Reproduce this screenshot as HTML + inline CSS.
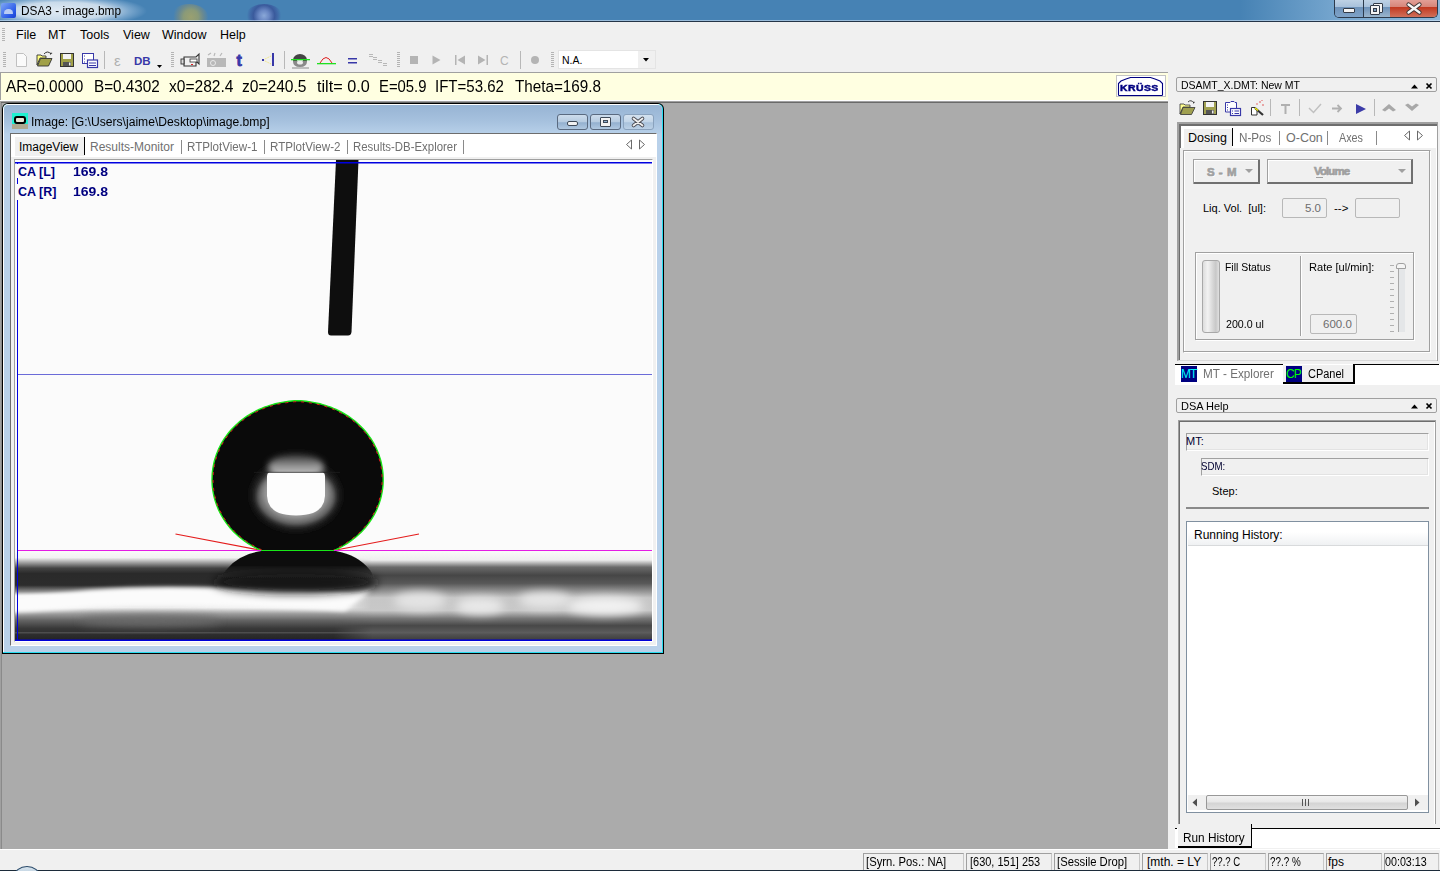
<!DOCTYPE html>
<html><head><meta charset="utf-8">
<style>
*{margin:0;padding:0;box-sizing:border-box}
html,body{width:1440px;height:871px;overflow:hidden;background:#f0f0f0;font-family:"Liberation Sans",sans-serif;font-size:12px;color:#000}
.a{position:absolute}
.t{position:absolute;white-space:nowrap;line-height:1}
svg{position:absolute;overflow:visible}
</style></head><body>
<div class="a" style="left:0;top:0;width:1440px;height:871px;overflow:hidden">

<!-- TITLE BAR -->
<div class="a" style="left:0;top:0;width:1440px;height:22px;background:#4682b4"></div>

<div class="a" style="left:0;top:0;width:200px;height:21px;background:radial-gradient(ellipse 85px 16px at 62px 11px,rgba(230,238,246,.97) 0,rgba(215,228,240,.9) 55%,rgba(170,200,228,.5) 80%,rgba(70,128,179,0) 100%)"></div>
<div class="a" style="left:170px;top:4px;width:38px;height:17px;overflow:hidden"><div class="a" style="left:0;top:0;width:38px;height:26px;border-radius:50%;background:radial-gradient(circle at 55% 50%,#9aa070 0,#8a9a78 30%,rgba(120,140,130,.7) 50%,rgba(70,130,180,0) 72%)"></div></div>
<div class="a" style="left:245px;top:4px;width:38px;height:17px;overflow:hidden"><div class="a" style="left:0;top:0;width:38px;height:26px;border-radius:50%;background:radial-gradient(circle at 50% 45%,#8aa8d8 0,#6a88c4 22%,#3a5a9c 45%,rgba(60,90,160,.6) 58%,rgba(70,130,180,0) 72%)"></div></div>
<div class="a" style="left:1240px;top:0;width:200px;height:21px;background:linear-gradient(90deg,rgba(150,190,225,0),rgba(160,198,230,.55) 50%,rgba(170,205,235,.7))"></div>
<div class="a" style="left:0;top:20px;width:1440px;height:1px;background:rgba(220,235,250,.55)"></div>
<div class="a" style="left:0;top:21px;width:1440px;height:1px;background:#253548"></div>
<!-- app icon -->
<div class="a" style="left:1px;top:3px;width:15px;height:15px;border-radius:2px;background:linear-gradient(135deg,#7fa6f5,#2a5be8 70%,#1a3fd0)"></div>
<div class="a" style="left:4px;top:9px;width:9px;height:5px;border-radius:5px 5px 1px 1px;background:#b8ccf5"></div>
<div class="t" style="--tw:100;transform:scaleX(0.9105);transform-origin:0 0;left:21px;top:4px;font-size:13px;color:#000">DSA3 - image.bmp</div>
<!-- caption buttons -->
<div class="a" style="left:1334px;top:-2px;width:104px;height:20px;border:1px solid #2c3a4c;border-top:none;border-radius:0 0 5px 5px;overflow:hidden">
  <div class="a" style="left:0;top:0;width:28px;height:19px;background:linear-gradient(180deg,#c4d6e8 0,#a9c2dc 45%,#6f93ba 50%,#7fa3c8 100%)"></div>
  <div class="a" style="left:28px;top:0;width:1px;height:19px;background:#2c3a4c"></div>
  <div class="a" style="left:29px;top:0;width:26px;height:19px;background:linear-gradient(180deg,#c4d6e8 0,#a9c2dc 45%,#6f93ba 50%,#9bb5cc 100%)"></div>
  <div class="a" style="left:55px;top:0;width:49px;height:19px;background:linear-gradient(180deg,#e6a7a0 0,#d7867a 45%,#c23a22 50%,#d0705a 100%)"></div>
</div>
<div class="a" style="left:1343px;top:8px;width:12px;height:5px;background:#f4f4f4;border:1px solid #333b48;border-radius:1px"></div>
<div class="a" style="left:1373px;top:3px;width:10px;height:10px;background:#f4f4f4;border:1px solid #333b48;border-radius:1px"></div>
<div class="a" style="left:1370px;top:5px;width:10px;height:10px;background:#f4f4f4;border:1px solid #333b48;border-radius:1px"></div>
<div class="a" style="left:1373px;top:8px;width:4px;height:4px;background:#7fa0c0;border:1px solid #333b48"></div>
<svg style="left:1407px;top:3px" width="14" height="11"><path d="M1.5 1.5 L12.5 9.5 M12.5 1.5 L1.5 9.5" stroke="#3a3030" stroke-width="4.2" stroke-linecap="round"/><path d="M1.5 1.5 L12.5 9.5 M12.5 1.5 L1.5 9.5" stroke="#f6f6f6" stroke-width="2.4" stroke-linecap="round"/></svg>

<!-- MENU -->
<div class="a" style="left:2px;top:28px;width:3px;height:14px;background:repeating-linear-gradient(180deg,#b5b5b5 0 1px,transparent 1px 2px)"></div>
<div class="t" style="left:16px;top:29px;font-size:12.5px">File</div>
<div class="t" style="left:48px;top:29px;font-size:12.5px">MT</div>
<div class="t" style="left:80px;top:29px;font-size:12.5px">Tools</div>
<div class="t" style="left:123px;top:29px;font-size:12.5px">View</div>
<div class="t" style="left:162px;top:29px;font-size:12.5px">Window</div>
<div class="t" style="left:220px;top:29px;font-size:12.5px">Help</div>

<!--TOOLBAR-->
<div class="a" style="left:0;top:47px;width:680px;height:25px;background:#f0f0f0"></div>
<svg style="left:0;top:48px" width="680" height="24">
 <!-- grips -->
 <g fill="#b4b4b4">
  <rect x="3" y="4" width="3" height="1"/><rect x="3" y="6" width="3" height="1"/><rect x="3" y="8" width="3" height="1"/><rect x="3" y="10" width="3" height="1"/><rect x="3" y="12" width="3" height="1"/><rect x="3" y="14" width="3" height="1"/><rect x="3" y="16" width="3" height="1"/><rect x="3" y="18" width="3" height="1"/>
  <rect x="171" y="4" width="3" height="1"/><rect x="171" y="6" width="3" height="1"/><rect x="171" y="8" width="3" height="1"/><rect x="171" y="10" width="3" height="1"/><rect x="171" y="12" width="3" height="1"/><rect x="171" y="14" width="3" height="1"/><rect x="171" y="16" width="3" height="1"/><rect x="171" y="18" width="3" height="1"/>
  <rect x="397" y="4" width="3" height="1"/><rect x="397" y="6" width="3" height="1"/><rect x="397" y="8" width="3" height="1"/><rect x="397" y="10" width="3" height="1"/><rect x="397" y="12" width="3" height="1"/><rect x="397" y="14" width="3" height="1"/><rect x="397" y="16" width="3" height="1"/><rect x="397" y="18" width="3" height="1"/>
  <rect x="551" y="4" width="3" height="1"/><rect x="551" y="6" width="3" height="1"/><rect x="551" y="8" width="3" height="1"/><rect x="551" y="10" width="3" height="1"/><rect x="551" y="12" width="3" height="1"/><rect x="551" y="14" width="3" height="1"/><rect x="551" y="16" width="3" height="1"/><rect x="551" y="18" width="3" height="1"/>
 </g>
 <!-- new doc -->
 <path d="M16.5 5.5 L23.5 5.5 L26.5 8.5 L26.5 18.5 L16.5 18.5 Z" fill="#fafafa" stroke="#c0c0c0"/>
 <!-- open -->
 <path d="M37 7 L41 7 L42 8 L46 8 L46 10 L40 10 L37 17 Z" fill="#ffff80" stroke="#333" stroke-width="0.9"/>
 <path d="M37.5 18 L40.5 10.5 L52 10.5 L48.5 18 Z" fill="#a0a048" stroke="#333" stroke-width="0.9"/>
 <path d="M44 6 Q47.5 2 51 6" fill="none" stroke="#333" stroke-width="1"/><path d="M50 7 L52.5 5 L50.5 4.5 Z" fill="#333"/>
 <!-- save -->
 <rect x="60.5" y="5.5" width="13" height="13" fill="#a0a048" stroke="#333" stroke-width="1"/>
 <rect x="63" y="6" width="8" height="5" fill="#f4f4f4"/>
 <rect x="63" y="14" width="8" height="4" fill="#555"/><rect x="69" y="14.5" width="1.5" height="3" fill="#eee"/>
 <!-- copy -->
 <rect x="82.5" y="5.5" width="11" height="10" fill="#fff" stroke="#3838a8" stroke-width="1"/>
 <path d="M84 8 L85 8 M84 11 L85 11 M84 14 L85 14" stroke="#3838a8" stroke-width="1"/>
 <rect x="87.5" y="12" width="10" height="7.5" fill="#fff" stroke="#3838a8" stroke-width="1.2"/>
 <path d="M89 15 L96 15 M89 17.5 L96 17.5" stroke="#3838a8" stroke-width="1"/>
 <rect x="104" y="3" width="1" height="18" fill="#b8b8b8"/>
 <!-- epsilon -->
 <text x="114" y="17.5" font-family="Liberation Sans" font-size="15" fill="#b0b0b0">&#949;</text>
 <!-- DB -->
 <text x="134" y="17" font-family="Liberation Sans" font-weight="bold" font-size="11.5" fill="#3838a8">DB</text>
 <path d="M157 17 L162 17 L159.5 20 Z" fill="#000"/>
 <!-- camera -->
 <path d="M184 9 L196 9 L199 6 L199 16 L196 13 L196 18 L184 18 Z" fill="#f0f0f0" stroke="#333" stroke-width="1.1"/>
 <rect x="181" y="11" width="3" height="5" fill="#ddd" stroke="#333" stroke-width="0.9"/>
 <rect x="190" y="11" width="7" height="3" fill="#fff" stroke="#333" stroke-width="0.8"/>
 <rect x="191" y="16" width="2" height="1" fill="#e02020"/>
 <!-- gray camera -->
 <path d="M207 10 L226 10 L226 19 L207 19 Z" fill="#b8b8b8"/>
 <path d="M208 7 L211 5 M214 8 L215 5 M220 8 L222 5" stroke="#b8b8b8" stroke-width="1.2"/>
 <circle cx="213" cy="15" r="2.5" fill="none" stroke="#e8e8e8" stroke-width="1"/>
 <!-- t -->
 <text x="236.5" y="18" font-family="Liberation Sans" font-weight="bold" font-size="16" fill="#3838a8" stroke="#3838a8" stroke-width="0.8">t</text>
 <!-- <| -->
 <path d="M263 12 L273 7 M263 12 L273 17" stroke="#f0e040" stroke-width="0.8" stroke-dasharray="1 1"/>
 <rect x="262" y="11" width="2" height="2" fill="#3838a8"/>
 <rect x="272" y="5" width="2" height="13" fill="#3838a8"/>
 <rect x="284" y="3" width="1" height="18" fill="#b8b8b8"/>
 <!-- drop icon -->
 <ellipse cx="300" cy="12" rx="7" ry="6" fill="#444"/>
 <ellipse cx="300" cy="13.5" rx="3.2" ry="2.5" fill="#ececec"/>
 <path d="M293 13 Q293 19 300 19 Q307 19 307 13" fill="#8a8a8a"/>
 <ellipse cx="300" cy="14.5" rx="3" ry="2" fill="#ececec"/>
 <rect x="291" y="11" width="19" height="1.3" fill="#20e020"/>
 <rect x="292" y="19.5" width="17" height="1" fill="#8a8a8a"/>
 <!-- arc -->
 <path d="M320 15 Q326 4 332 15" fill="none" stroke="#e02020" stroke-width="1"/>
 <rect x="317" y="15" width="19" height="1.3" fill="#20e020"/>
 <!-- = -->
 <rect x="348" y="10" width="9" height="1.5" fill="#3838a8"/><rect x="348" y="14" width="9" height="1.5" fill="#3838a8"/>
 <!-- steps -->
 <g fill="#b8b8b8"><rect x="369" y="6" width="4" height="1"/><rect x="369" y="8" width="4" height="1"/><rect x="373" y="9" width="4" height="1"/><rect x="373" y="11" width="4" height="1"/><rect x="378" y="12" width="4" height="1"/><rect x="378" y="14" width="4" height="1"/><rect x="383" y="15" width="4" height="1"/><rect x="383" y="17" width="4" height="1"/></g>
 <!-- media -->
 <rect x="410" y="8" width="8" height="8" fill="#b4b4b4"/>
 <path d="M432.5 7.5 L440.5 12 L432.5 16.5 Z" fill="#b4b4b4"/>
 <path d="M455 7 L456.5 7 L456.5 17 L455 17 Z M465 7.5 L457.5 12 L465 16.5 Z" fill="#b4b4b4"/>
 <path d="M486.5 7 L488 7 L488 17 L486.5 17 Z M478 7.5 L485.5 12 L478 16.5 Z" fill="#b4b4b4"/>
 <text x="500" y="17" font-family="Liberation Sans" font-size="12" fill="#b4b4b4">C</text>
 <rect x="520" y="3" width="1" height="18" fill="#b8b8b8"/>
 <circle cx="535" cy="12" r="4" fill="#b4b4b4"/>
</svg>
<!-- combo N.A. -->
<div class="a" style="left:558px;top:50px;width:98px;height:19px;background:#fff;border:1px solid #e4e4e4"></div>
<div class="a" style="left:638px;top:51px;width:17px;height:17px;background:#f0f0f0"></div>
<svg style="left:643px;top:58px" width="8" height="5"><path d="M0 0 L6 0 L3 3.5 Z" fill="#000"/></svg>
<div class="t" style="left:562px;top:55px;font-size:10.5px;color:#000">N.A.</div>

<!--TOOLBAR_END-->

<!-- YELLOW INFO BAR -->
<div class="a" style="left:0;top:72px;width:1168px;height:1px;background:#a0a0a0"></div>
<div class="a" style="left:0;top:73px;width:1168px;height:27px;background:#ffffe1;border-left:1px solid #a0a0a0"></div>
<div class="t" style="--tw:77.3;transform:scaleX(0.9601);transform-origin:0 0;left:6px;top:79px;font-size:16px">AR=0.0000</div>
<div class="t" style="--tw:65.8;transform:scaleX(0.9543);transform-origin:0 0;left:94px;top:79px;font-size:16px">B=0.4302</div>
<div class="t" style="--tw:64.5;transform:scaleX(0.9731);transform-origin:0 0;left:169px;top:79px;font-size:16px">x0=282.4</div>
<div class="t" style="--tw:64.5;transform:scaleX(0.9731);transform-origin:0 0;left:242px;top:79px;font-size:16px">z0=240.5</div>
<div class="t" style="--tw:52.7;transform:scaleX(1.0129);transform-origin:0 0;left:317px;top:79px;font-size:16px">tilt= 0.0</div>
<div class="t" style="--tw:47.5;transform:scaleX(0.9285);transform-origin:0 0;left:379px;top:79px;font-size:16px">E=05.9</div>
<div class="t" style="--tw:68.9;transform:scaleX(0.9390);transform-origin:0 0;left:435px;top:79px;font-size:16px">IFT=53.62</div>
<div class="t" style="--tw:86;transform:scaleX(0.9524);transform-origin:0 0;left:515px;top:79px;font-size:16px">Theta=169.8</div>
<!-- kruss logo -->
<svg style="left:1116px;top:75px" width="50" height="23">
 <rect x="0.5" y="0.5" width="49" height="21" fill="#fff" stroke="#c4c4c4"/>
 <path d="M2.5 20 L2.5 8.5 L5 6 L10 4 L14.5 2.5 L34.5 2.5 L39 4 L44 6 L46.5 8.5 L46.5 20 Q46.5 20.5 45.5 20.5 L3.5 20.5 Q2.5 20.5 2.5 20 Z" fill="none" stroke="#000080" stroke-width="1.1"/>
</svg>
<div class="t" style="left:1120px;top:83px;font-size:10.5px;font-weight:bold;color:#000080;letter-spacing:0.4px;-webkit-text-stroke:0.5px #000080;transform:scaleY(0.85);transform-origin:0 0">KR&#220;SS</div>
<!-- MDI AREA -->
<div class="a" style="left:0;top:100px;width:1168px;height:1px;background:#fff"></div>
<div class="a" style="left:0;top:101px;width:1168px;height:748px;background:#ababab;border-top:1px solid #a0a0a0;border-left:1px solid #a0a0a0"></div>
<div class="a" style="left:1px;top:102px;width:1167px;height:1px;background:#696969"></div>
<div class="a" style="left:1px;top:103px;width:1px;height:746px;background:#8a8a8a"></div>
<div class="a" style="left:0;top:849px;width:1440px;height:1px;background:#fff"></div>

<!--CHILD-->
<!-- MDI child frame -->
<div class="a" style="left:2px;top:103px;width:662px;height:551px;background:#000;border-radius:6px 6px 0 0"></div>
<div class="a" style="left:3px;top:104px;width:660px;height:549px;background:#28dcf0;border-radius:5px 5px 0 0"></div>
<div class="a" style="left:3px;top:104px;width:659px;height:548px;background:#fff;border-radius:5px 5px 0 0"></div>
<div class="a" style="left:4px;top:105px;width:658px;height:547px;background:linear-gradient(180deg,#97b4d4 0,#a6c1de 16px,#b6cfe8 28px,#b9d1ea 29px,#b9d1ea 100%);border-radius:4px 4px 0 0"></div>
<!-- child icon -->
<div class="a" style="left:12px;top:113px;width:16px;height:11px;background:#20f0d0"></div>
<div class="a" style="left:12px;top:124px;width:16px;height:5px;background:#b0a890"></div>
<div class="a" style="left:14px;top:116px;width:12px;height:8px;background:#e8e8d8;border:2px solid #000;border-radius:3px"></div>
<div class="t" style="--tw:238.5;transform:scaleX(0.9698);transform-origin:0 0;left:31px;top:116px;font-size:12.5px;color:#000">Image: [G:\Users\jaime\Desktop\image.bmp]</div>
<!-- child buttons -->
<div class="a" style="left:557px;top:114px;width:31px;height:16px;border:1px solid #5a6a80;border-radius:3px;background:linear-gradient(180deg,#cddcec 0,#b6cbe0 50%,#93b0cf 55%,#b0c8e0 100%)"></div>
<div class="a" style="left:590px;top:114px;width:31px;height:16px;border:1px solid #5a6a80;border-radius:3px;background:linear-gradient(180deg,#cddcec 0,#b6cbe0 50%,#93b0cf 55%,#b0c8e0 100%)"></div>
<div class="a" style="left:623px;top:114px;width:31px;height:16px;border:1px solid #8aa2bd;border-radius:3px;background:linear-gradient(180deg,#d4e2f0 0,#c2d5e8 50%,#a9c2dc 55%,#bcd1e6 100%)"></div>
<div class="a" style="left:567px;top:121px;width:11px;height:5px;background:#f2f2f2;border:1px solid #3f4a58;border-radius:2px"></div>
<div class="a" style="left:600px;top:117px;width:11px;height:10px;background:#f2f2f2;border:1px solid #3f4a58;border-radius:1px"></div>
<div class="a" style="left:603px;top:120px;width:5px;height:3px;background:#8fb0d0;border:1px solid #3f4a58"></div>
<svg style="left:632px;top:117px" width="12" height="10"><path d="M1.5 1.5 L10.5 8.5 M10.5 1.5 L1.5 8.5" stroke="#4a4a52" stroke-width="3.6" stroke-linecap="round"/><path d="M1.5 1.5 L10.5 8.5 M10.5 1.5 L1.5 8.5" stroke="#f0f0f0" stroke-width="1.8" stroke-linecap="round"/></svg>

<!-- client area -->
<div class="a" style="left:10px;top:133px;width:647px;height:513px;background:#fff;border-top:1px solid #6d6d6d;border-left:1px solid #6d6d6d;border-right:1px solid #fff;border-bottom:1px solid #fff"></div>
<div class="a" style="left:11px;top:134px;width:645px;height:511px;background:#f0f0f0"></div>
<div class="a" style="left:11px;top:134px;width:645px;height:23px;background:#fff"></div>
<!-- tabs -->
<div class="a" style="left:15px;top:137px;width:70px;height:19px;background:#f0f0f0"></div>
<div class="a" style="left:84px;top:137px;width:1px;height:18px;background:#000"></div>
<div class="t" style="left:19px;top:141px;font-size:12px;color:#000">ImageView</div>
<div class="t" style="left:90px;top:141px;font-size:12px;color:#707070">Results-Monitor</div>
<div class="a" style="left:181px;top:140px;width:1px;height:14px;background:#8a8a8a"></div>
<div class="t" style="--tw:70.5;transform:scaleX(0.9668);transform-origin:0 0;left:187px;top:141px;font-size:12px;color:#707070">RTPlotView-1</div>
<div class="a" style="left:264px;top:140px;width:1px;height:14px;background:#8a8a8a"></div>
<div class="t" style="--tw:70.5;transform:scaleX(0.9668);transform-origin:0 0;left:270px;top:141px;font-size:12px;color:#707070">RTPlotView-2</div>
<div class="a" style="left:347px;top:140px;width:1px;height:14px;background:#8a8a8a"></div>
<div class="t" style="--tw:104;transform:scaleX(0.9510);transform-origin:0 0;left:353px;top:141px;font-size:12px;color:#707070">Results-DB-Explorer</div>
<div class="a" style="left:463px;top:140px;width:1px;height:14px;background:#8a8a8a"></div>
<svg style="left:625px;top:139px" width="22" height="12"><path d="M6.5 1 L6.5 10 L1.5 5.5 Z M14.5 1 L14.5 10 L19.5 5.5 Z" fill="none" stroke="#6a6a6a" stroke-width="1"/></svg>
<!-- image border -->
<div class="a" style="left:14px;top:159px;width:639px;height:483px;border:1px solid #a0a0a0;border-right-color:#fff;border-bottom-color:#fff"></div>

<!--IMG-->
<svg style="left:15px;top:160px" width="637" height="481" viewBox="15 160 637 481">
 <defs>
  <filter id="b1" x="-100%" y="-200%" width="300%" height="500%"><feGaussianBlur stdDeviation="0.7"/></filter>
  <filter id="b2" x="-100%" y="-200%" width="300%" height="500%"><feGaussianBlur stdDeviation="2"/></filter>
  <filter id="b3" x="-100%" y="-200%" width="300%" height="500%"><feGaussianBlur stdDeviation="3"/></filter>
  <filter id="b5" x="-100%" y="-200%" width="300%" height="500%"><feGaussianBlur stdDeviation="5"/></filter>
  <filter id="b8" x="-100%" y="-200%" width="300%" height="500%"><feGaussianBlur stdDeviation="8"/></filter>
  <clipPath id="sub"><rect x="15" y="551" width="637" height="90"/></clipPath>
  <clipPath id="drop"><path d="M261.1 550.5 L258.8 549.5 L256.6 548.4 L254.4 547.2 L252.2 546.0 L250.0 544.7 L247.9 543.3 L245.8 541.9 L243.7 540.4 L241.6 538.8 L239.6 537.2 L237.6 535.5 L235.7 533.7 L233.8 531.9 L232.0 530.0 L230.2 528.0 L228.5 525.9 L226.9 523.8 L225.3 521.6 L223.8 519.3 L222.3 517.0 L221.0 514.6 L219.7 512.2 L218.5 509.7 L217.4 507.1 L216.4 504.5 L215.5 501.9 L214.7 499.2 L214.0 496.5 L213.4 493.7 L212.9 490.9 L212.5 488.1 L212.2 485.3 L212.1 482.5 L212.0 479.6 L212.1 476.7 L212.2 473.9 L212.5 471.0 L212.9 468.2 L213.4 465.3 L214.0 462.5 L214.7 459.7 L215.6 456.9 L216.5 454.2 L217.6 451.5 L218.7 448.8 L220.0 446.2 L221.3 443.7 L222.8 441.2 L224.3 438.7 L226.0 436.3 L227.7 434.0 L229.5 431.7 L231.4 429.5 L233.4 427.4 L235.4 425.4 L237.6 423.4 L239.7 421.5 L242.0 419.7 L244.3 418.0 L246.6 416.4 L249.1 414.8 L251.5 413.3 L254.0 412.0 L256.6 410.7 L259.1 409.4 L261.8 408.3 L264.4 407.2 L267.1 406.3 L269.8 405.4 L272.5 404.6 L275.2 403.8 L278.0 403.2 L280.7 402.6 L283.5 402.1 L286.3 401.7 L289.1 401.3 L291.9 401.0 L294.8 400.7 L297.6 400.6 L300.4 400.7 L303.3 401.0 L306.1 401.3 L308.9 401.7 L311.7 402.1 L314.5 402.6 L317.2 403.2 L320.0 403.8 L322.7 404.6 L325.4 405.4 L328.1 406.3 L330.8 407.2 L333.4 408.3 L336.1 409.4 L338.6 410.7 L341.2 412.0 L343.7 413.3 L346.1 414.8 L348.6 416.4 L350.9 418.0 L353.2 419.7 L355.5 421.5 L357.6 423.4 L359.8 425.4 L361.8 427.4 L363.8 429.5 L365.7 431.7 L367.5 434.0 L369.2 436.3 L370.9 438.7 L372.4 441.2 L373.9 443.7 L375.2 446.2 L376.5 448.8 L377.6 451.5 L378.7 454.2 L379.6 456.9 L380.5 459.7 L381.2 462.5 L381.8 465.3 L382.3 468.2 L382.7 471.0 L383.0 473.9 L383.1 476.7 L383.2 479.6 L383.1 482.5 L383.0 485.3 L382.7 488.1 L382.3 490.9 L381.8 493.7 L381.2 496.5 L380.5 499.2 L379.7 501.9 L378.8 504.5 L377.8 507.1 L376.7 509.7 L375.5 512.2 L374.2 514.6 L372.9 517.0 L371.4 519.3 L369.9 521.6 L368.3 523.8 L366.7 525.9 L365.0 528.0 L363.2 530.0 L361.4 531.9 L359.5 533.7 L357.6 535.5 L355.6 537.2 L353.6 538.8 L351.5 540.4 L349.4 541.9 L347.3 543.3 L345.2 544.7 L343.0 546.0 L340.8 547.2 L338.6 548.4 L336.4 549.5 L334.1 550.5 Z"/></clipPath>
  <linearGradient id="subg" x1="0" y1="551" x2="0" y2="641" gradientUnits="userSpaceOnUse">
   <stop offset="0" stop-color="#fbfbfb"/><stop offset="0.08" stop-color="#f4f4f4"/>
   <stop offset="0.17" stop-color="#6a6a6a"/><stop offset="0.26" stop-color="#3a3a3a"/>
   <stop offset="0.38" stop-color="#404040"/><stop offset="0.48" stop-color="#9a9a9a"/>
   <stop offset="0.62" stop-color="#b4b4b4"/><stop offset="0.74" stop-color="#707070"/>
   <stop offset="0.86" stop-color="#4a4a4a"/><stop offset="0.93" stop-color="#5a5a5a"/>
   <stop offset="1" stop-color="#303030"/>
  </linearGradient>
  <linearGradient id="subL" x1="0" y1="551" x2="0" y2="641" gradientUnits="userSpaceOnUse">
   <stop offset="0" stop-color="#fbfbfb"/><stop offset="0.075" stop-color="#f2f2f2"/>
   <stop offset="0.19" stop-color="#444"/><stop offset="0.25" stop-color="#2a2a2a"/>
   <stop offset="0.38" stop-color="#2c2c2c"/><stop offset="0.45" stop-color="#8a8a8a"/>
   <stop offset="0.5" stop-color="#f6f6f6"/><stop offset="0.63" stop-color="#eeeeee"/>
   <stop offset="0.7" stop-color="#9a9a9a"/><stop offset="0.77" stop-color="#646464"/>
   <stop offset="0.86" stop-color="#383838"/><stop offset="1" stop-color="#222"/>
  </linearGradient>
  <linearGradient id="subR" x1="0" y1="551" x2="0" y2="641" gradientUnits="userSpaceOnUse">
   <stop offset="0" stop-color="#fbfbfb"/><stop offset="0.1" stop-color="#eeeeee"/>
   <stop offset="0.18" stop-color="#6a6a6a"/><stop offset="0.27" stop-color="#464646"/>
   <stop offset="0.36" stop-color="#585858"/><stop offset="0.44" stop-color="#8e8e8e"/>
   <stop offset="0.52" stop-color="#c6c6c6"/><stop offset="0.66" stop-color="#c8c8c8"/>
   <stop offset="0.75" stop-color="#767676"/><stop offset="0.83" stop-color="#484848"/>
   <stop offset="0.9" stop-color="#5a5a5a"/><stop offset="1" stop-color="#3a3a3a"/>
  </linearGradient>
  <linearGradient id="mLg" x1="15" y1="0" x2="652" y2="0" gradientUnits="userSpaceOnUse">
   <stop offset="0" stop-color="#fff"/><stop offset="0.5" stop-color="#fff"/><stop offset="0.56" stop-color="#000"/>
  </linearGradient>
  <mask id="mL"><rect x="15" y="551" width="637" height="90" fill="url(#mLg)"/></mask>
  <linearGradient id="hiG" x1="0" y1="0" x2="0" y2="1"><stop offset="0" stop-color="#2a2a2a"/><stop offset="0.5" stop-color="#9a9a9a"/><stop offset="1" stop-color="#d8d8d8"/></linearGradient>
  <linearGradient id="domeG" x1="0" y1="551" x2="0" y2="580" gradientUnits="userSpaceOnUse"><stop offset="0" stop-color="#0c0c0c"/><stop offset="0.5" stop-color="#111"/><stop offset="1" stop-color="#1c1c1c" stop-opacity="0"/></linearGradient>
 </defs>
 <rect x="15" y="160" width="637" height="481" fill="#fbfbfb"/>
 <!-- needle -->
 <path d="M336 160 L358.5 160 L351.5 332 Q351 335.5 348 335.5 L331 335.5 Q328 335.5 328 332 Z" fill="#0e0e0e"/>
 <!-- substrate -->
 <g clip-path="url(#sub)">
  <rect x="15" y="551" width="637" height="90" fill="url(#subR)"/>
  <rect x="15" y="551" width="637" height="90" fill="url(#subL)" mask="url(#mL)"/>
  <!-- left white band curve -->
  <path d="M-20 597 Q40 596 90 590 Q150 585 220 588 Q300 591 340 592 Q355 594 372 590 L345 611 Q300 608 220 606 Q150 604 90 607 Q40 612 -20 614 Z" fill="#fbfbfb" filter="url(#b2)"/>
  <ellipse cx="150" cy="621" rx="70" ry="5" fill="#6a6a6a" filter="url(#b5)"/>
  <!-- right blotches -->
  <ellipse cx="420" cy="601" rx="26" ry="9" fill="#e4e4e4" filter="url(#b5)"/>
  <ellipse cx="480" cy="606" rx="24" ry="8" fill="#eaeaea" filter="url(#b5)"/>
  <ellipse cx="545" cy="600" rx="26" ry="8" fill="#e6e6e6" filter="url(#b5)"/>
  <ellipse cx="605" cy="606" rx="38" ry="9" fill="#f2f2f2" filter="url(#b5)"/>
  <!-- under-drop dark bulge -->
  <ellipse cx="296" cy="582" rx="82" ry="11" fill="#181818" filter="url(#b5)"/>
  <path d="M261 551 Q238 555 226 570 Q224 574 220 580 L376 580 Q372 574 370 570 Q358 555 336 551 Z" fill="url(#domeG)" filter="url(#b1)"/>
  <rect x="-20" y="632" width="720" height="1.5" fill="#606060" opacity=".6" filter="url(#b1)"/>
 </g>
 <!-- drop -->
 <path d="M261.1 550.5 L258.8 549.5 L256.6 548.4 L254.4 547.2 L252.2 546.0 L250.0 544.7 L247.9 543.3 L245.8 541.9 L243.7 540.4 L241.6 538.8 L239.6 537.2 L237.6 535.5 L235.7 533.7 L233.8 531.9 L232.0 530.0 L230.2 528.0 L228.5 525.9 L226.9 523.8 L225.3 521.6 L223.8 519.3 L222.3 517.0 L221.0 514.6 L219.7 512.2 L218.5 509.7 L217.4 507.1 L216.4 504.5 L215.5 501.9 L214.7 499.2 L214.0 496.5 L213.4 493.7 L212.9 490.9 L212.5 488.1 L212.2 485.3 L212.1 482.5 L212.0 479.6 L212.1 476.7 L212.2 473.9 L212.5 471.0 L212.9 468.2 L213.4 465.3 L214.0 462.5 L214.7 459.7 L215.6 456.9 L216.5 454.2 L217.6 451.5 L218.7 448.8 L220.0 446.2 L221.3 443.7 L222.8 441.2 L224.3 438.7 L226.0 436.3 L227.7 434.0 L229.5 431.7 L231.4 429.5 L233.4 427.4 L235.4 425.4 L237.6 423.4 L239.7 421.5 L242.0 419.7 L244.3 418.0 L246.6 416.4 L249.1 414.8 L251.5 413.3 L254.0 412.0 L256.6 410.7 L259.1 409.4 L261.8 408.3 L264.4 407.2 L267.1 406.3 L269.8 405.4 L272.5 404.6 L275.2 403.8 L278.0 403.2 L280.7 402.6 L283.5 402.1 L286.3 401.7 L289.1 401.3 L291.9 401.0 L294.8 400.7 L297.6 400.6 L300.4 400.7 L303.3 401.0 L306.1 401.3 L308.9 401.7 L311.7 402.1 L314.5 402.6 L317.2 403.2 L320.0 403.8 L322.7 404.6 L325.4 405.4 L328.1 406.3 L330.8 407.2 L333.4 408.3 L336.1 409.4 L338.6 410.7 L341.2 412.0 L343.7 413.3 L346.1 414.8 L348.6 416.4 L350.9 418.0 L353.2 419.7 L355.5 421.5 L357.6 423.4 L359.8 425.4 L361.8 427.4 L363.8 429.5 L365.7 431.7 L367.5 434.0 L369.2 436.3 L370.9 438.7 L372.4 441.2 L373.9 443.7 L375.2 446.2 L376.5 448.8 L377.6 451.5 L378.7 454.2 L379.6 456.9 L380.5 459.7 L381.2 462.5 L381.8 465.3 L382.3 468.2 L382.7 471.0 L383.0 473.9 L383.1 476.7 L383.2 479.6 L383.1 482.5 L383.0 485.3 L382.7 488.1 L382.3 490.9 L381.8 493.7 L381.2 496.5 L380.5 499.2 L379.7 501.9 L378.8 504.5 L377.8 507.1 L376.7 509.7 L375.5 512.2 L374.2 514.6 L372.9 517.0 L371.4 519.3 L369.9 521.6 L368.3 523.8 L366.7 525.9 L365.0 528.0 L363.2 530.0 L361.4 531.9 L359.5 533.7 L357.6 535.5 L355.6 537.2 L353.6 538.8 L351.5 540.4 L349.4 541.9 L347.3 543.3 L345.2 544.7 L343.0 546.0 L340.8 547.2 L338.6 548.4 L336.4 549.5 L334.1 550.5 Z" fill="#0a0a0a"/>
 <g clip-path="url(#drop)">
  <ellipse cx="296" cy="495" rx="44" ry="35" fill="#2a2a2a" filter="url(#b3)"/>
  <ellipse cx="296" cy="496" rx="39" ry="29" fill="#707070" filter="url(#b2)"/>
  <ellipse cx="296" cy="494" rx="33" ry="25" fill="#9a9a9a" filter="url(#b2)"/>
  <ellipse cx="296" cy="467" rx="28" ry="13" fill="url(#hiG)" filter="url(#b3)"/>
  <path d="M269 472.5 L323 472.5 Q325 473 325 476 L325 496 Q324 515.5 296 515.5 Q268 515.5 267 496 L267 476 Q267 473 269 472.5 Z" fill="#fdfdfd" filter="url(#b1)"/>
  <rect x="254" y="471.8" width="86" height="1.2" fill="#202020" opacity=".6"/>
 </g>
 <path d="M175.5 534 L262 550.5 M333.6 550.5 L419 534" stroke="#e41c1c" stroke-width="1.1" fill="none"/>
 <path d="M261.1 550.5 L258.8 549.5 L256.6 548.4 L254.4 547.2 L252.2 546.0 L250.0 544.7 L247.9 543.3 L245.8 541.9 L243.7 540.4 L241.6 538.8 L239.6 537.2 L237.6 535.5 L235.7 533.7 L233.8 531.9 L232.0 530.0 L230.2 528.0 L228.5 525.9 L226.9 523.8 L225.3 521.6 L223.8 519.3 L222.3 517.0 L221.0 514.6 L219.7 512.2 L218.5 509.7 L217.4 507.1 L216.4 504.5 L215.5 501.9 L214.7 499.2 L214.0 496.5 L213.4 493.7 L212.9 490.9 L212.5 488.1 L212.2 485.3 L212.1 482.5 L212.0 479.6 L212.1 476.7 L212.2 473.9 L212.5 471.0 L212.9 468.2 L213.4 465.3 L214.0 462.5 L214.7 459.7 L215.6 456.9 L216.5 454.2 L217.6 451.5 L218.7 448.8 L220.0 446.2 L221.3 443.7 L222.8 441.2 L224.3 438.7 L226.0 436.3 L227.7 434.0 L229.5 431.7 L231.4 429.5 L233.4 427.4 L235.4 425.4 L237.6 423.4 L239.7 421.5 L242.0 419.7 L244.3 418.0 L246.6 416.4 L249.1 414.8 L251.5 413.3 L254.0 412.0 L256.6 410.7 L259.1 409.4 L261.8 408.3 L264.4 407.2 L267.1 406.3 L269.8 405.4 L272.5 404.6 L275.2 403.8 L278.0 403.2 L280.7 402.6 L283.5 402.1 L286.3 401.7 L289.1 401.3 L291.9 401.0 L294.8 400.7 L297.6 400.6 L300.4 400.7 L303.3 401.0 L306.1 401.3 L308.9 401.7 L311.7 402.1 L314.5 402.6 L317.2 403.2 L320.0 403.8 L322.7 404.6 L325.4 405.4 L328.1 406.3 L330.8 407.2 L333.4 408.3 L336.1 409.4 L338.6 410.7 L341.2 412.0 L343.7 413.3 L346.1 414.8 L348.6 416.4 L350.9 418.0 L353.2 419.7 L355.5 421.5 L357.6 423.4 L359.8 425.4 L361.8 427.4 L363.8 429.5 L365.7 431.7 L367.5 434.0 L369.2 436.3 L370.9 438.7 L372.4 441.2 L373.9 443.7 L375.2 446.2 L376.5 448.8 L377.6 451.5 L378.7 454.2 L379.6 456.9 L380.5 459.7 L381.2 462.5 L381.8 465.3 L382.3 468.2 L382.7 471.0 L383.0 473.9 L383.1 476.7 L383.2 479.6 L383.1 482.5 L383.0 485.3 L382.7 488.1 L382.3 490.9 L381.8 493.7 L381.2 496.5 L380.5 499.2 L379.7 501.9 L378.8 504.5 L377.8 507.1 L376.7 509.7 L375.5 512.2 L374.2 514.6 L372.9 517.0 L371.4 519.3 L369.9 521.6 L368.3 523.8 L366.7 525.9 L365.0 528.0 L363.2 530.0 L361.4 531.9 L359.5 533.7 L357.6 535.5 L355.6 537.2 L353.6 538.8 L351.5 540.4 L349.4 541.9 L347.3 543.3 L345.2 544.7 L343.0 546.0 L340.8 547.2 L338.6 548.4 L336.4 549.5 L334.1 550.5" fill="none" stroke="#18e818" stroke-width="1.4"/>
 <path d="M261.1 550.5 L258.8 549.5 L256.6 548.4 L254.4 547.2 L252.2 546.0 L250.0 544.7 L247.9 543.3 L245.8 541.9 L243.7 540.4 L241.6 538.8 L239.6 537.2 L237.6 535.5 L235.7 533.7 L233.8 531.9 L232.0 530.0 L230.2 528.0 L228.5 525.9 L226.9 523.8 L225.3 521.6 L223.8 519.3 L222.3 517.0 L221.0 514.6 L219.7 512.2 L218.5 509.7 L217.4 507.1 L216.4 504.5 L215.5 501.9 L214.7 499.2 L214.0 496.5 L213.4 493.7 L212.9 490.9 L212.5 488.1 L212.2 485.3 L212.1 482.5 L212.0 479.6 L212.1 476.7 L212.2 473.9 L212.5 471.0 L212.9 468.2 L213.4 465.3 L214.0 462.5 L214.7 459.7 L215.6 456.9 L216.5 454.2 L217.6 451.5 L218.7 448.8 L220.0 446.2 L221.3 443.7 L222.8 441.2 L224.3 438.7 L226.0 436.3 L227.7 434.0 L229.5 431.7 L231.4 429.5 L233.4 427.4 L235.4 425.4 L237.6 423.4 L239.7 421.5 L242.0 419.7 L244.3 418.0 L246.6 416.4 L249.1 414.8 L251.5 413.3 L254.0 412.0 L256.6 410.7 L259.1 409.4 L261.8 408.3 L264.4 407.2 L267.1 406.3 L269.8 405.4 L272.5 404.6 L275.2 403.8 L278.0 403.2 L280.7 402.6 L283.5 402.1 L286.3 401.7 L289.1 401.3 L291.9 401.0 L294.8 400.7 L297.6 400.6 L300.4 400.7 L303.3 401.0 L306.1 401.3 L308.9 401.7 L311.7 402.1 L314.5 402.6 L317.2 403.2 L320.0 403.8 L322.7 404.6 L325.4 405.4 L328.1 406.3 L330.8 407.2 L333.4 408.3 L336.1 409.4 L338.6 410.7 L341.2 412.0 L343.7 413.3 L346.1 414.8 L348.6 416.4 L350.9 418.0 L353.2 419.7 L355.5 421.5 L357.6 423.4 L359.8 425.4 L361.8 427.4 L363.8 429.5 L365.7 431.7 L367.5 434.0 L369.2 436.3 L370.9 438.7 L372.4 441.2 L373.9 443.7 L375.2 446.2 L376.5 448.8 L377.6 451.5 L378.7 454.2 L379.6 456.9 L380.5 459.7 L381.2 462.5 L381.8 465.3 L382.3 468.2 L382.7 471.0 L383.0 473.9 L383.1 476.7 L383.2 479.6 L383.1 482.5 L383.0 485.3 L382.7 488.1 L382.3 490.9 L381.8 493.7 L381.2 496.5 L380.5 499.2 L379.7 501.9 L378.8 504.5 L377.8 507.1 L376.7 509.7 L375.5 512.2 L374.2 514.6 L372.9 517.0 L371.4 519.3 L369.9 521.6 L368.3 523.8 L366.7 525.9 L365.0 528.0 L363.2 530.0 L361.4 531.9 L359.5 533.7 L357.6 535.5 L355.6 537.2 L353.6 538.8 L351.5 540.4 L349.4 541.9 L347.3 543.3 L345.2 544.7 L343.0 546.0 L340.8 547.2 L338.6 548.4 L336.4 549.5 L334.1 550.5" fill="none" stroke="#e41c1c" stroke-width="1" stroke-dasharray="3 5" transform="translate(297.6 486) scale(0.988) translate(-297.6 -486)"/>
 <!-- lines -->
 <rect x="17" y="374" width="635" height="1" fill="#6b6bd8"/>
 <rect x="17" y="550" width="635" height="1" fill="#e41ce4"/>
 <rect x="261" y="550" width="73" height="1" fill="#18e818"/>
 <rect x="15" y="162" width="637" height="1.5" fill="#0000e0"/>
 <rect x="17" y="162" width="1" height="479" fill="#0000e0"/>
 <rect x="15" y="639.5" width="637" height="1.5" fill="#0000d8"/>
</svg>
<!--IMG_END-->
<div class="a" style="left:17px;top:164px;width:1px;height:14px;background:#fcfcfc"></div>
<div class="a" style="left:17px;top:184px;width:1px;height:16px;background:#fcfcfc"></div>
<div class="t" style="left:18px;top:166px;font-size:12.5px;font-weight:bold;color:#000080">CA [L]</div>
<div class="t" style="--tw:35;transform:scaleX(1.1189);transform-origin:0 0;left:73px;top:166px;font-size:12.5px;font-weight:bold;color:#000080">169.8</div>
<div class="t" style="left:18px;top:186px;font-size:12.5px;font-weight:bold;color:#000080">CA [R]</div>
<div class="t" style="--tw:35;transform:scaleX(1.1189);transform-origin:0 0;left:73px;top:186px;font-size:12.5px;font-weight:bold;color:#000080">169.8</div>

<!--CHILD_END-->

<!--RIGHT-->
<!-- right dock panel -->
<div class="a" style="left:1168px;top:72px;width:272px;height:777px;background:#f0f0f0"></div>
<!-- title box 1 -->
<div class="a" style="left:1176px;top:77px;width:261px;height:15px;border:1px solid #a0a0a0;border-radius:2px;background:#f0f0f0"></div>
<div class="t" style="--tw:119;transform:scaleX(0.9130);transform-origin:0 0;left:1181px;top:80px;font-size:11.5px">DSAMT_X.DMT: New MT</div>
<svg style="left:1410px;top:83px" width="28" height="8"><path d="M1 5.5 L4.5 1.5 L8 5.5 Z" fill="#000"/><path d="M16.5 0.5 L21.5 5.5 M21.5 0.5 L16.5 5.5" stroke="#000" stroke-width="1.7"/></svg>
<!-- panel toolbar -->
<svg style="left:1178px;top:99px" width="260" height="18">
 <!-- open -->
 <path d="M2 5 L6 5 L7 6 L12 6 L12 8 L5 8 L2 15 Z" fill="#ffff90" stroke="#333" stroke-width="0.8"/>
 <path d="M2.5 15.5 L5 8.5 L17 8.5 L13.5 15.5 Z" fill="#a0a050" stroke="#333" stroke-width="0.8"/>
 <path d="M10 3 Q13 0 16 4" fill="none" stroke="#333" stroke-width="0.9"/><path d="M15 5 L17 3 L15.5 2.5 Z" fill="#333"/>
 <!-- save -->
 <rect x="25.5" y="2.5" width="13" height="13" fill="#a0a050" stroke="#333" stroke-width="1"/>
 <rect x="28" y="3" width="8" height="5" fill="#f4f4f4"/>
 <rect x="28" y="11" width="8" height="4" fill="#555"/><rect x="34" y="11.5" width="1.5" height="3" fill="#eee"/>
 <!-- copy -->
 <path d="M47.5 3.5 L52 3.5 L53 2.5 L56 2.5 L57 3.5 L58.5 3.5 L58.5 13 L47.5 13 Z" fill="#fff" stroke="#3838a8" stroke-width="1"/>
 <path d="M49 6 L50 6 M49 8.5 L50 8.5 M49 11 L50 11" stroke="#3838a8"/>
 <rect x="52.5" y="9.5" width="10" height="7" fill="#fff" stroke="#3838a8" stroke-width="1.2"/>
 <path d="M54 12 L55 12 M56.5 12 L61 12 M54 14.5 L55 14.5 M56.5 14.5 L61 14.5" stroke="#3838a8" stroke-width="1"/>
 <!-- wand -->
 <path d="M73.5 8.5 L77 8.5 L79 10.5 L79 16 L73.5 16 Z" fill="#fff" stroke="#333" stroke-width="1"/>
 <path d="M77 9 L85 16" stroke="#333" stroke-width="2.2"/><path d="M77 9 L80 11.5" stroke="#ee0" stroke-width="1.4"/>
 <circle cx="82" cy="3" r="0.8" fill="#d44"/><circle cx="85" cy="6" r="0.8" fill="#d44"/><circle cx="79" cy="5" r="0.7" fill="#d44"/><circle cx="84" cy="1.5" r="0.6" fill="#d44"/>
 <rect x="92" y="0" width="1" height="17" fill="#b8b8b8"/>
 <!-- T -->
 <path d="M103 6 L112 6 M107.5 6 L107.5 15" stroke="#b0b0b0" stroke-width="2"/>
 <rect x="121" y="0" width="1" height="17" fill="#b8b8b8"/>
 <!-- check -->
 <path d="M131 9 L135.5 13.5 L143 5" stroke="#c0c0c0" stroke-width="1.5" fill="none"/>
 <!-- arrow -->
 <path d="M154 9.5 L163 9.5 M159.5 6 L163 9.5 L159.5 13" stroke="#b0b0b0" stroke-width="1.8" fill="none"/>
 <!-- play -->
 <path d="M178 5 L188 10 L178 15 Z" fill="#3c3ca8"/>
 <rect x="196" y="0" width="1" height="17" fill="#b8b8b8"/>
 <!-- up/down -->
 <path d="M204 11 L211 5 L218 11 L215 12.5 L211 9.5 L207 12.5 Z" fill="#a8a8a8"/>
 <path d="M227 6 L230 4.5 L234 7.5 L238 4.5 L241 6 L234 12 Z" fill="#a8a8a8"/>
</svg>

<!-- tab control frame -->
<div class="a" style="left:1177px;top:122px;width:261px;height:239px;border-top:2px solid #a0a0a0;border-left:2px solid #a0a0a0;border-right:1px solid #c8c8c8;border-bottom:1px solid #d8d8d8;background:#fff"></div>
<div class="a" style="left:1437px;top:122px;width:1px;height:239px;background:#a0a0a0"></div>
<div class="a" style="left:1179px;top:124px;width:258px;height:236px;background:#fff;border-left:2px solid #6e6e6e;border-top:2px solid #6e6e6e"></div>
<div class="a" style="left:1180px;top:148px;width:256px;height:212px;background:#f0f0f0"></div>
<!-- tabs -->
<div class="a" style="left:1184px;top:129px;width:48px;height:19px;background:#f0f0f0"></div>
<div class="a" style="left:1232px;top:128px;width:1px;height:18px;background:#000"></div>
<div class="t" style="left:1188px;top:132px;font-size:12.5px">Dosing</div>
<div class="t" style="--tw:32.4;transform:scaleX(0.9328);transform-origin:0 0;left:1239px;top:132px;font-size:12.5px;color:#707070">N-Pos</div>
<div class="a" style="left:1279px;top:131px;width:1px;height:14px;background:#8a8a8a"></div>
<div class="t" style="left:1286px;top:132px;font-size:12.5px;color:#707070">O-Con</div>
<div class="a" style="left:1327px;top:131px;width:1px;height:14px;background:#8a8a8a"></div>
<div class="t" style="--tw:24;transform:scaleX(0.8634);transform-origin:0 0;left:1339px;top:132px;font-size:12.5px;color:#707070">Axes</div>
<div class="a" style="left:1376px;top:131px;width:1px;height:14px;background:#8a8a8a"></div>
<svg style="left:1403px;top:130px" width="22" height="12"><path d="M6.5 1 L6.5 10 L1.5 5.5 Z M14.5 1 L14.5 10 L19.5 5.5 Z" fill="none" stroke="#6a6a6a" stroke-width="1"/></svg>
<!-- inner group -->
<div class="a" style="left:1183px;top:150px;width:248px;height:203px;border:1px solid #a0a0a0;border-right-color:#fff;border-bottom-color:#fff;box-shadow:inset -1px -1px 0 #a0a0a0, inset 1px 1px 0 #fff"></div>
<!-- combos -->
<div class="a" style="left:1193px;top:159px;width:67px;height:25px;border:1px solid #fff;border-right:2px solid #707070;border-bottom:2px solid #707070;background:#f0f0f0;box-shadow:inset 1px 1px 0 #fff, 0 0 0 0 #000"></div>
<div class="a" style="left:1193px;top:159px;width:67px;height:25px;border-left:1px solid #a0a0a0;border-top:1px solid #a0a0a0"></div>
<div class="t" style="left:1207px;top:167px;font-size:11.5px;font-weight:bold;color:#a0a0a0;letter-spacing:0.5px;-webkit-text-stroke:0.7px #a0a0a0;text-shadow:1px 1px 0 #fff">S - M</div>
<svg style="left:1245px;top:169px" width="10" height="6"><path d="M0 0 L8 0 L4 4 Z" fill="#a0a0a0"/></svg>
<div class="a" style="left:1267px;top:159px;width:146px;height:25px;border-right:2px solid #707070;border-bottom:2px solid #707070;border-left:1px solid #a0a0a0;border-top:1px solid #a0a0a0;background:#f0f0f0;box-shadow:inset 1px 1px 0 #fff"></div>
<div class="t" style="left:1314px;top:166px;font-size:11.5px;font-weight:bold;color:#a0a0a0;letter-spacing:-0.9px;-webkit-text-stroke:0.7px #a0a0a0;text-shadow:1px 1px 0 #fff">Volume</div>
<div class="a" style="left:1316px;top:177px;width:7px;height:1px;background:#a0a0a0"></div>
<svg style="left:1398px;top:169px" width="10" height="6"><path d="M0 0 L8 0 L4 4 Z" fill="#a0a0a0"/></svg>
<!-- liq vol -->
<div class="t" style="left:1203px;top:203px;font-size:11px">Liq. Vol.&nbsp; [ul]:</div>
<div class="a" style="left:1282px;top:198px;width:45px;height:20px;border:1px solid #b8b8b8;border-radius:2px;background:#f0f0f0"></div>
<div class="t" style="left:1305px;top:203px;font-size:11.5px;color:#6d6d6d">5.0</div>
<div class="t" style="left:1334px;top:203px;font-size:11.5px">--&gt;</div>
<div class="a" style="left:1355px;top:198px;width:45px;height:20px;border:1px solid #b8b8b8;border-radius:2px;background:#f0f0f0"></div>
<!-- fill group -->
<div class="a" style="left:1195px;top:252px;width:219px;height:88px;border:1px solid #a0a0a0;box-shadow:inset 1px 1px 0 #fff,1px 1px 0 #fff"></div>
<div class="a" style="left:1202px;top:260px;width:18px;height:73px;border:1px solid #a8a8a8;border-radius:3px;background:linear-gradient(90deg,#dcdcdc 0,#f2f2f2 30%,#d8d8d8 60%,#c8c8c8 80%,#e0e0e0 100%)"></div>
<div class="t" style="--tw:45.8;transform:scaleX(0.9069);transform-origin:0 0;left:1225px;top:262px;font-size:11.5px">Fill Status</div>
<div class="t" style="--tw:37.9;transform:scaleX(0.9258);transform-origin:0 0;left:1226px;top:319px;font-size:11.5px">200.0 ul</div>
<div class="a" style="left:1300px;top:256px;width:1px;height:80px;background:#a0a0a0"></div>
<div class="a" style="left:1301px;top:256px;width:1px;height:80px;background:#fff"></div>
<div class="t" style="--tw:65.4;transform:scaleX(0.9653);transform-origin:0 0;left:1309px;top:262px;font-size:11.5px">Rate [ul/min]:</div>
<div class="a" style="left:1310px;top:314px;width:47px;height:20px;border:1px solid #b8b8b8;border-radius:2px;background:#f0f0f0"></div>
<div class="t" style="left:1323px;top:319px;font-size:11.5px;color:#6d6d6d">600.0</div>
<!-- slider -->
<div class="a" style="left:1398px;top:266px;width:7px;height:66px;background:#e4e6e8;border-left:1px solid #a8a8a8;border-top:1px solid #a8a8a8"></div>
<div class="a" style="left:1396px;top:263px;width:10px;height:6px;background:#f4f4f4;border:1px solid #a0a0a0;border-radius:3px 3px 0 0"></div>
<div class="a" style="left:1390px;top:265px;width:4px;height:67px;background:repeating-linear-gradient(180deg,#b0b0b0 0 1px,transparent 1px 6px)"></div>

<!-- dock tabs MT Explorer / CPanel -->
<div class="a" style="left:1175px;top:364px;width:265px;height:21px;background:#fff"></div>
<div class="a" style="left:1175px;top:364px;width:108px;height:1px;background:#000"></div>
<div class="a" style="left:1353px;top:364px;width:86px;height:1px;background:#000"></div>
<div class="a" style="left:1283px;top:365px;width:72px;height:19px;background:#f0f0f0;border-right:2px solid #000;border-bottom:2px solid #000"></div>
<div class="a" style="left:1181px;top:366px;width:16px;height:16px;background:#000080"></div>
<div class="t" style="left:1181px;top:368px;font-size:12px;color:#00ffff;letter-spacing:-1px">MT</div>
<div class="t" style="--tw:70.8;transform:scaleX(0.9379);transform-origin:0 0;left:1203px;top:368px;font-size:12.5px;color:#707070">MT - Explorer</div>
<div class="a" style="left:1286px;top:366px;width:16px;height:16px;background:#000080"></div>
<div class="t" style="left:1286px;top:368px;font-size:12px;color:#00ff00;letter-spacing:-1px">CP</div>
<div class="t" style="--tw:36;transform:scaleX(0.8780);transform-origin:0 0;left:1308px;top:368px;font-size:12.5px">CPanel</div>

<!-- DSA Help title -->
<div class="a" style="left:1176px;top:398px;width:261px;height:15px;border:1px solid #a0a0a0;border-radius:2px;background:#f0f0f0"></div>
<div class="t" style="--tw:47.6;transform:scaleX(0.9547);transform-origin:0 0;left:1181px;top:401px;font-size:11.5px">DSA Help</div>
<svg style="left:1410px;top:403px" width="28" height="8"><path d="M1 5.5 L4.5 1.5 L8 5.5 Z" fill="#000"/><path d="M16.5 0.5 L21.5 5.5 M21.5 0.5 L16.5 5.5" stroke="#000" stroke-width="1.7"/></svg>
<!-- help frame -->
<div class="a" style="left:1178px;top:420px;width:258px;height:404px;border-top:1px solid #a0a0a0;border-left:1px solid #a0a0a0;border-right:1px solid #a0a0a0;background:#f0f0f0;box-shadow:inset 1px 1px 0 #6e6e6e, inset -1px 0 0 #fff"></div>
<div class="a" style="left:1186px;top:433px;width:243px;height:18px;border-top:1px solid #a0a0a0;border-left:1px solid #a0a0a0;border-bottom:1px solid #fff;border-right:1px solid #fff;box-shadow:inset -1px -1px 0 #e3e3e3"></div>
<div class="t" style="left:1186px;top:436px;font-size:11px;color:#000030">MT:</div>
<div class="a" style="left:1201px;top:458px;width:228px;height:18px;border-top:1px solid #a0a0a0;border-left:1px solid #a0a0a0;border-bottom:1px solid #fff;border-right:1px solid #fff;box-shadow:inset -1px -1px 0 #e3e3e3"></div>
<div class="t" style="--tw:24.2;transform:scaleX(0.8800);transform-origin:0 0;left:1201px;top:461px;font-size:11px;color:#000030">SDM:</div>
<div class="t" style="left:1212px;top:486px;font-size:11px">Step:</div>
<div class="a" style="left:1186px;top:507px;width:243px;height:2px;background:#8a8a8a"></div>
<!-- running history -->
<div class="a" style="left:1186px;top:521px;width:243px;height:292px;border:1px solid #8090a0;background:#fff"></div>
<div class="a" style="left:1188px;top:532px;width:240px;height:14px;background:linear-gradient(180deg,#fff,#eef0f2)"></div>
<div class="a" style="left:1188px;top:545px;width:240px;height:1px;background:#d8dadc"></div>
<div class="t" style="left:1194px;top:529px;font-size:12px">Running History:</div>
<!-- scrollbar -->
<div class="a" style="left:1188px;top:795px;width:240px;height:15px;background:#f0f0f0"></div>
<svg style="left:1191px;top:798px" width="8" height="9"><path d="M6 0.5 L6 8.5 L1.5 4.5 Z" fill="#505050"/></svg>
<svg style="left:1414px;top:798px" width="8" height="9"><path d="M1 0.5 L1 8.5 L5.5 4.5 Z" fill="#505050"/></svg>
<div class="a" style="left:1206px;top:795px;width:202px;height:15px;border:1px solid #989898;border-radius:2px;background:linear-gradient(180deg,#f2f2f2 0,#e8e8e8 45%,#d4d4d4 55%,#e0e0e0 100%)"></div>
<div class="a" style="left:1302px;top:799px;width:7px;height:7px;background:repeating-linear-gradient(90deg,#555 0 1px,transparent 1px 3px)"></div>
<!-- run history tab -->
<div class="a" style="left:1175px;top:828px;width:265px;height:20px;background:#fff"></div>
<div class="a" style="left:1252px;top:828px;width:188px;height:1px;background:#000"></div>
<div class="a" style="left:1178px;top:824px;width:74px;height:24px;background:#f0f0f0;border-right:1px solid #000;border-bottom:2px solid #000"></div>
<div class="a" style="left:1175px;top:828px;width:2px;height:1px;background:#000"></div>
<div class="t" style="--tw:61.7;transform:scaleX(0.9449);transform-origin:0 0;left:1183px;top:832px;font-size:12.5px">Run History</div>

<!--RIGHT_END-->

<!-- STATUS BAR -->
<!--STATUS-->
<div class="a" style="left:863px;top:853px;width:101px;height:17px;border:1px solid #a0a0a0;border-bottom:none;border-right-color:#c8c8c8"></div>
<div class="t" style="--tw:80.2;transform:scaleX(0.9396);transform-origin:0 0;left:866px;top:856px;font-size:12px">[Syrn. Pos.: NA]</div>
<div class="a" style="left:966px;top:853px;width:86px;height:17px;border:1px solid #a0a0a0;border-bottom:none;border-right-color:#c8c8c8"></div>
<div class="t" style="--tw:70.2;transform:scaleX(0.9148);transform-origin:0 0;left:970px;top:856px;font-size:12px">[630, 151] 253</div>
<div class="a" style="left:1054px;top:853px;width:86px;height:17px;border:1px solid #a0a0a0;border-bottom:none;border-right-color:#c8c8c8"></div>
<div class="t" style="--tw:70.2;transform:scaleX(0.9397);transform-origin:0 0;left:1057px;top:856px;font-size:12px">[Sessile Drop]</div>
<div class="a" style="left:1142px;top:853px;width:66px;height:17px;border:1px solid #a0a0a0;border-bottom:none;border-right-color:#c8c8c8;overflow:hidden"><div class="t" style="left:4px;top:2px;font-size:12px">[mth. = LY</div></div>
<div class="a" style="left:1210px;top:853px;width:56px;height:17px;border:1px solid #a0a0a0;border-bottom:none;border-right-color:#c8c8c8"></div>
<div class="t" style="--tw:28.3;transform:scaleX(0.8004);transform-origin:0 0;left:1212px;top:856px;font-size:12px">??.? C</div>
<div class="a" style="left:1268px;top:853px;width:56px;height:17px;border:1px solid #a0a0a0;border-bottom:none;border-right-color:#c8c8c8"></div>
<div class="t" style="--tw:30.8;transform:scaleX(0.8244);transform-origin:0 0;left:1270px;top:856px;font-size:12px">??.? %</div>
<div class="a" style="left:1326px;top:853px;width:56px;height:17px;border:1px solid #a0a0a0;border-bottom:none;border-right-color:#c8c8c8"></div>
<div class="t" style="left:1328px;top:856px;font-size:12px">fps</div>
<div class="a" style="left:1384px;top:853px;width:55px;height:17px;border:1px solid #a0a0a0;border-bottom:none;border-right-color:#c8c8c8"></div>
<div class="t" style="--tw:41.7;transform:scaleX(0.8926);transform-origin:0 0;left:1385px;top:856px;font-size:12px">00:03:13</div>

<!--STATUS_END-->
<div class="a" style="left:0;top:870px;width:1440px;height:1px;background:#1c2b3a"></div>
<div class="a" style="left:14px;top:866px;width:26px;height:20px;border-radius:50%;border:1px solid #2a4a6a;background:linear-gradient(180deg,#d8e4ee,#8fb0c8)"></div>

</div>
</body></html>
